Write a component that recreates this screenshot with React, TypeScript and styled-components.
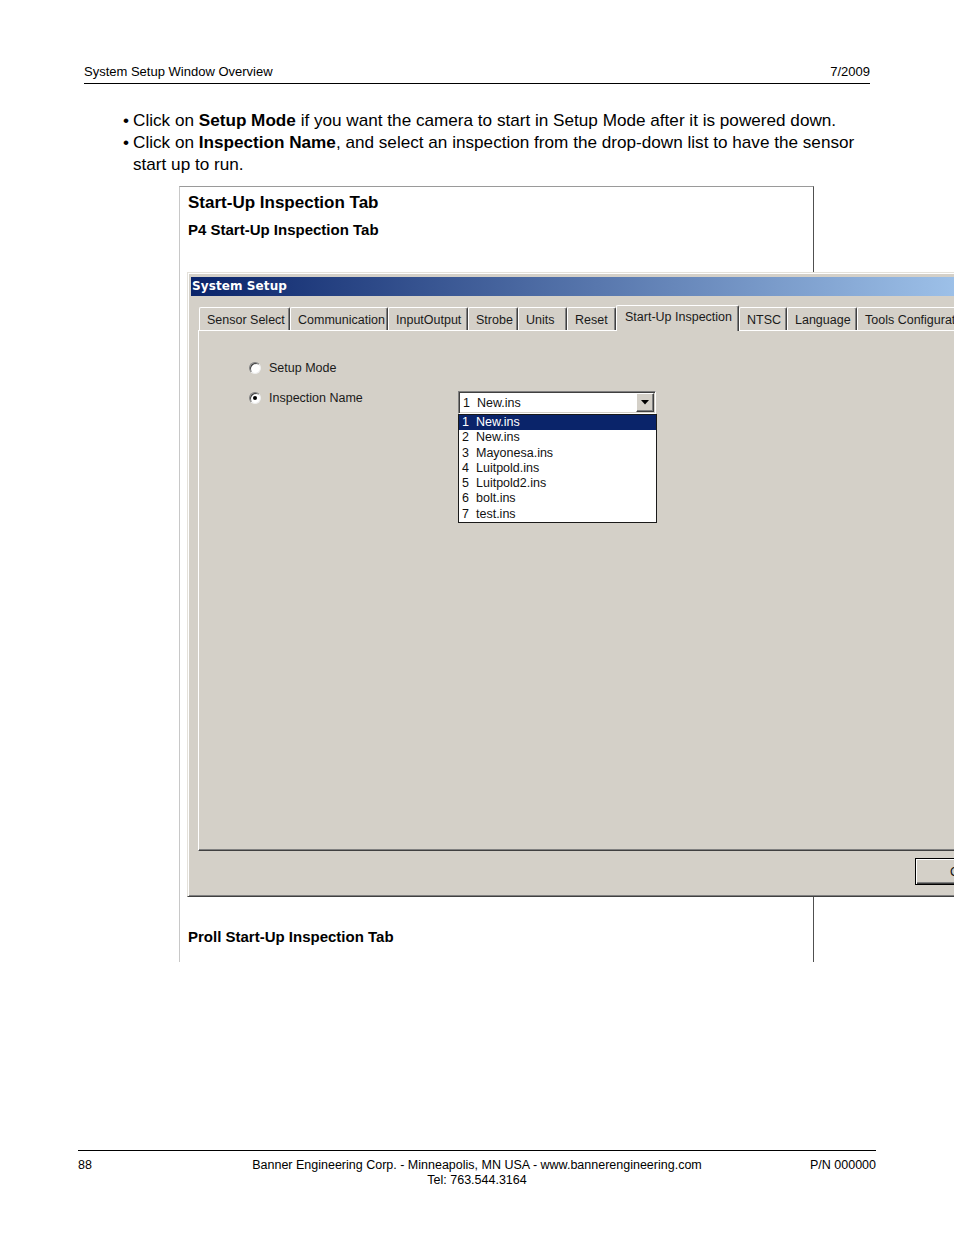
import styled, { createGlobalStyle } from 'styled-components';

const GlobalStyle = createGlobalStyle`
  html, body {
    margin: 0;
    padding: 0;
    background: #fff;
  }
  body {
    font-family: "Liberation Sans", Arial, sans-serif;
    color: #000;
  }
`;

const tabs = [
  { label: 'Sensor Select', width: 91 },
  { label: 'Communication', width: 98 },
  { label: 'InputOutput', width: 80 },
  { label: 'Strobe', width: 50 },
  { label: 'Units', width: 49 },
  { label: 'Reset', width: 49 },
  { label: 'Start-Up Inspection', width: 123, active: true },
  { label: 'NTSC', width: 48 },
  { label: 'Language', width: 70 },
  { label: 'Tools Configuration', width: 130 },
];

const inspections = [
  'New.ins',
  'New.ins',
  'Mayonesa.ins',
  'Luitpold.ins',
  'Luitpold2.ins',
  'bolt.ins',
  'test.ins',
];

const App = () => {
  return (
    <>
      <GlobalStyle />
      <_Page>
        <_Header>
          <span>System Setup Window Overview</span>
          <span>7/2009</span>
        </_Header>

        <_Bullets>
          <li>
            Click on <b>Setup Mode</b> if you want the camera to start in Setup Mode after it is
            powered down.
          </li>
          <li>
            Click on <b>Inspection Name</b>, and select an inspection from the drop-down list to
            have the sensor start up to run.
          </li>
        </_Bullets>

        <_Box>
          <_BoxTitle>Start-Up Inspection Tab</_BoxTitle>
          <_SubTitle>P4 Start-Up Inspection Tab</_SubTitle>

          <_Window>
            <_TitleBar>System Setup</_TitleBar>
            <_TabStrip>
              {tabs.map((tab) => (
                <_Tab key={tab.label} $active={!!tab.active} $width={tab.width}>
                  {tab.label}
                </_Tab>
              ))}
            </_TabStrip>
            <_Panel>
              <_Options>
                <_RadioRow $span>
                  <_Radio />
                  Setup Mode
                </_RadioRow>
                <_RadioRow>
                  <_Radio $checked />
                  Inspection Name
                </_RadioRow>
                <_Combo>
                  <_ComboField>
                    <_Num>1</_Num>New.ins
                    <_ArrowButton>
                      <svg width="8" height="5" viewBox="0 0 8 5">
                        <path d="M0 0h8L4 4.5z" fill="#000" />
                      </svg>
                    </_ArrowButton>
                  </_ComboField>
                  <_List>
                    {inspections.map((name, i) => (
                      <_ListItem key={i} $selected={i === 0}>
                        <_Num>{i + 1}</_Num>
                        {name}
                      </_ListItem>
                    ))}
                  </_List>
                </_Combo>
              </_Options>
            </_Panel>
            <_ButtonBar>
              <_Button>OK</_Button>
            </_ButtonBar>
          </_Window>

          <_SubTitle $gap={31}>Proll Start-Up Inspection Tab</_SubTitle>
        </_Box>

        <_Footer>
          <span>88</span>
          <_FooterCenter>
            Banner Engineering Corp. - Minneapolis, MN USA - www.bannerengineering.com
            <br />
            Tel: 763.544.3164
          </_FooterCenter>
          <_FooterRight>P/N 000000</_FooterRight>
        </_Footer>
      </_Page>
    </>
  );
};

export default App;

const _Page = styled.div`
  width: 954px;
  height: 1235px;
  overflow: hidden;
  position: relative;
`;

const _Header = styled.div`
  margin: 0 84px;
  padding-top: 64px;
  padding-bottom: 3px;
  border-bottom: 1px solid #000;
  display: flex;
  justify-content: space-between;
  font-size: 13px;
  line-height: 16px;
`;

const _Bullets = styled.ul`
  list-style: none;
  margin: 25px 0 0 123px;
  padding: 0;
  font-size: 17.15px;
  line-height: 22px;
  width: 740px;
  > li {
    padding-left: 10px;
    position: relative;
  }
  > li::before {
    content: '•';
    position: absolute;
    left: 0;
  }
`;

const _Box = styled.div`
  margin: 11px 0 0 179px;
  width: 633px;
  border-top: 1px solid #9a9a9a;
  border-left: 1px solid #c8c8c8;
  border-right: 1px solid #505050;
  padding-bottom: 16px;
`;

const _BoxTitle = styled.div`
  margin: 6px 0 0 8px;
  font-size: 17px;
  font-weight: bold;
  line-height: 20px;
`;

const _SubTitle = styled.div<{ $gap?: number }>`
  margin: ${({ $gap }) => $gap ?? 8}px 0 0 8px;
  font-size: 15px;
  font-weight: bold;
  line-height: 18px;
`;

const _Window = styled.div`
  position: relative;
  margin: 33px 0 0 7px;
  width: 812px;
  padding: 4px 3px 3px;
  background: #d4d0c8;
  border: 1px solid;
  border-color: #e4e1da #404040 #404040 #e4e1da;
  box-shadow: inset 1px 1px #fff, inset -1px -1px #808080;
  font-family: "Liberation Sans", Arial, sans-serif;
  font-size: 12.5px;
`;

const _TitleBar = styled.div`
  height: 19px;
  line-height: 19px;
  padding-left: 1px;
  background: linear-gradient(to right, #0a246a, #a6caf0);
  color: #fff;
  font-family: "DejaVu Sans", Verdana, sans-serif;
  font-weight: bold;
  font-size: 12px;
  letter-spacing: 0.1px;
`;

const _TabStrip = styled.div`
  height: 34px;
  display: flex;
  align-items: flex-end;
  padding-left: 8px;
  position: relative;
  z-index: 1;
`;

const _Tab = styled.div<{ $active: boolean; $width: number }>`
  flex: none;
  box-sizing: border-box;
  width: ${({ $width }) => $width}px;
  height: ${({ $active }) => ($active ? 26 : 23)}px;
  margin-bottom: ${({ $active }) => ($active ? -1 : 0)}px;
  padding: ${({ $active }) => ($active ? '3px 0 0 8px' : '4px 0 0 7px')};
  background: #d4d0c8;
  border-top: 1px solid #fff;
  border-left: 1px solid #fff;
  border-right: 1px solid #404040;
  box-shadow: inset -1px 0 #808080;
  border-radius: 2px 2px 0 0;
  color: #1a1a1a;
  white-space: nowrap;
  overflow: hidden;
  line-height: 16px;
`;

const _Panel = styled.div`
  height: 519px;
  margin-left: 7px;
  border-top: 1px solid #fff;
  border-left: 1px solid #fff;
  border-bottom: 1px solid #404040;
  box-shadow: inset 0 -1px #808080;
`;

const _Options = styled.div`
  display: grid;
  grid-template-columns: 209px auto;
  row-gap: 16px;
  align-items: start;
  padding: 30px 0 0 50px;
`;

const _RadioRow = styled.div<{ $span?: boolean }>`
  grid-column: ${({ $span }) => ($span ? '1 / span 2' : 'auto')};
  display: flex;
  align-items: center;
  gap: 8px;
  height: 14px;
  color: #1a1a1a;
`;

const _Radio = styled.span<{ $checked?: boolean }>`
  box-sizing: border-box;
  width: 12px;
  height: 12px;
  border-radius: 50%;
  background: #fff;
  border: 1px solid;
  border-color: #808080 #eee #eee #808080;
  box-shadow: inset 1px 1px #404040;
  position: relative;
  &::after {
    content: '';
    display: ${({ $checked }) => ($checked ? 'block' : 'none')};
    position: absolute;
    left: 3px;
    top: 3px;
    width: 4px;
    height: 4px;
    border-radius: 50%;
    background: #000;
  }
`;

const _Combo = styled.div`
  position: relative;
  width: 198px;
`;

const _ComboField = styled.div`
  box-sizing: border-box;
  height: 23px;
  display: flex;
  align-items: center;
  padding-left: 4px;
  background: #fff;
  border: 1px solid;
  border-color: #808080 #fff #fff #808080;
  box-shadow: inset 1px 1px #404040, inset -1px -1px #d4d0c8;
  color: #111;
`;

const _ArrowButton = styled.span`
  margin-left: auto;
  margin-right: 1px;
  box-sizing: border-box;
  width: 18px;
  height: 19px;
  display: flex;
  align-items: center;
  justify-content: center;
  background: #d4d0c8;
  border: 1px solid;
  border-color: #fff #404040 #404040 #fff;
  box-shadow: inset -1px -1px #808080;
`;

const _Num = styled.span`
  display: inline-block;
  width: 14px;
`;

const _List = styled.div`
  position: absolute;
  top: 100%;
  left: 0;
  width: 199px;
  box-sizing: border-box;
  border: 1px solid #1a1a1a;
  background: #fff;
  z-index: 2;
`;

const _ListItem = styled.div<{ $selected: boolean }>`
  height: 15.3px;
  line-height: 15.3px;
  padding-left: 3px;
  background: ${({ $selected }) => ($selected ? '#0a246a' : '#fff')};
  color: ${({ $selected }) => ($selected ? '#fff' : '#111')};
  white-space: nowrap;
`;

const _ButtonBar = styled.div`
  height: 42px;
  display: flex;
  justify-content: flex-end;
  padding-top: 7px;
  box-sizing: border-box;
`;

const _Button = styled.div`
  box-sizing: border-box;
  width: 88px;
  height: 27px;
  display: flex;
  align-items: center;
  justify-content: center;
  background: #d4d0c8;
  border: 1px solid #000;
  box-shadow: inset 1px 1px #fff, inset -1px -1px #404040, inset -2px -2px #808080;
  color: #111;
`;

const _Footer = styled.div`
  margin: 188px 78px 0;
  border-top: 1px solid #000;
  padding-top: 7px;
  display: grid;
  grid-template-columns: 1fr auto 1fr;
  font-size: 12.5px;
  line-height: 15px;
`;

const _FooterCenter = styled.div`
  text-align: center;
`;

const _FooterRight = styled.div`
  text-align: right;
`;
